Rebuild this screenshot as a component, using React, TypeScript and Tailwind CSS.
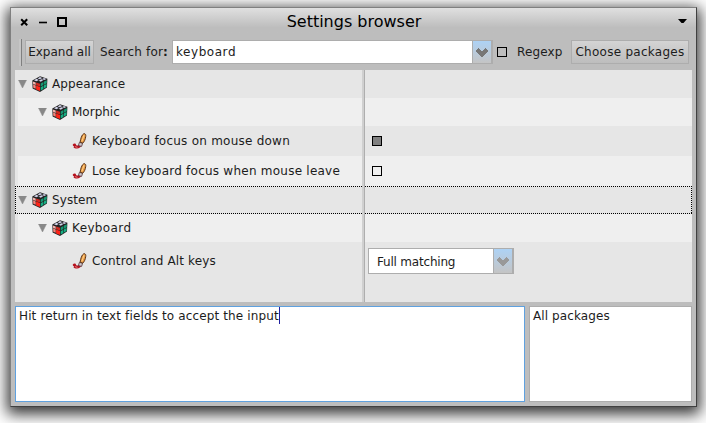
import type { ReactNode } from "react";

function CubeIcon() {
  return (
    <svg width="16" height="16" viewBox="0 0 16 16" className="shrink-0">
      <path d="M.3 4.5 8 .2 15.4 2.8 15 11.5 8 15.9.6 12.6Z" fill="#222" />
      <path d="M2 4.3 4.6 2.8 6.8 3.9 4.4 5.2ZM5.6 2.5 8 1.1 10.2 2 7.9 3.3ZM6.8 4.8 9.3 3.3 11.4 4.1 8.8 5.7ZM10.2 3 12 2 14.4 2.9 12.2 3.9Z" fill="#cfcfe6" />
      <path d="M.9 5.4 3.7 6.5V8.9L1 7.8Z" fill="#f6b4ae" />
      <path d="M1.1 8.3 3.7 9.4V12.8L1.3 11.8Z" fill="#f8857c" />
      <path d="M4.1 6.5 8 7.8V10.4L4.1 9.2Z" fill="#d02a20" />
      <path d="M4.1 9.6 8 10.9V15L4.1 13.4Z" fill="#ff2418" />
      <path d="M8.7 7.6 11.4 6.1V9.1L8.7 10.6ZM12 5.6 14.8 4.2V7.3L12 8.7Z" fill="#169872" />
      <path d="M8.7 11.2 11.4 9.7V12.9L8.7 14.6ZM12 9.3 14.6 7.9V11.1L12 12.5Z" fill="#16b084" />
    </svg>
  );
}

function BrushIcon() {
  return (
    <svg width="16" height="16" viewBox="0 0 16 16" className="shrink-0">
      <path d="M.8 11.4C2 10 4 10.5 4 11.8c0 1 1.5 1 2.6.2l2.4.6c.2 1.6-1.8 3-4 3-1.6 0-3-.4-3.6-1.3l1-.6C1.3 13.2.6 12.3.8 11.4Z" fill="#b5121e" />
      <path d="M3 13.6 5.4 14.4" stroke="#e99a9a" strokeWidth=".8" />
      <path d="M7.4 9.4 10.6 10.2 9.6 13.4 6.4 12.6Z" fill="#cfc8cc" stroke="#503038" strokeWidth=".8" />
      <path d="M8.1 9.2C8.6 6 9.6 1.8 11.8.7c1.8-.4 2.2 1.4 1.9 3-.4 2.8-1.3 4.9-2.9 6.4Z" fill="#e99a42" stroke="#5a361c" strokeWidth="1" />
      <path d="M9.8 8.4 12.1 2.2" stroke="#ffd08a" strokeWidth="1.1" />
    </svg>
  );
}

function Chevron({ color }: { color: string }) {
  return (
    <svg width="12" height="9" viewBox="0 0 12 9" shapeRendering="crispEdges">
      <path d="M0 2.4 2.4 0 6 3.5 9.6 0 12 2.4V3.4L6 9 0 3.4Z" fill={color} />
    </svg>
  );
}

function SelectionOutline() {
  const across = "absolute left-0 right-0 h-px bg-[repeating-linear-gradient(to_right,#000_0_1px,transparent_1px_2px)]";
  const down = "absolute top-0 bottom-0 w-px bg-[repeating-linear-gradient(to_bottom,#000_0_1px,transparent_1px_2px)]";
  return (
    <>
      <div className={`${across} top-0`} />
      <div className={`${across} bottom-0`} />
      <div className={`${down} left-0`} />
      <div className={`${down} right-0`} />
    </>
  );
}

interface RowProps {
  size: string;
  indent: string;
  light?: boolean;
  leaf?: boolean;
  selected?: boolean;
  label: string;
  spacing: string;
  cell?: string;
  children?: ReactNode;
}

function Row({ size, indent, light, leaf, selected, label, spacing, cell = "", children }: RowProps) {
  return (
    <div className={`relative flex ${size} ${light ? "ml-[3px] bg-[#efefef]" : "bg-[#e6e6e6]"}`}>
      <div className={`flex items-center shrink-0 ${light ? "w-[344px]" : "w-[347px]"} ${indent} ${cell}`}>
        {!leaf && (
          <svg width="9" height="8" viewBox="0 0 9 8" className="mr-[5px] shrink-0">
            <path d="M.5 0H8.5L4.5 8Z" fill="#888" stroke="#888" strokeWidth=".5" />
          </svg>
        )}
        <div className="shrink-0 w-4 h-4 mr-1">{leaf ? <BrushIcon /> : <CubeIcon />}</div>
        <span className={spacing}>{label}</span>
      </div>
      <div className="relative z-10 w-[3px] shrink-0 bg-[#d0d0d0] border-r border-[#aeaeae]" />
      <div className={`flex flex-1 items-center ${cell}`}>{children}</div>
      {selected && <SelectionOutline />}
    </div>
  );
}

export default function App() {
  return (
    <div className="w-[706px] h-[423px] overflow-hidden bg-white pl-[10px] pt-[7px] font-['DejaVu_Sans',sans-serif] text-[12px] leading-[16px] text-[#1c1c1c] whitespace-pre">
      <div className="w-[687px] h-[400px] flex flex-col border border-t-[#808080] border-l-[#808080] border-r-[#404040] border-b-[#404040] bg-[#bdbdbd] shadow-[0_4px_14px_3px_rgba(0,0,0,0.8)]">
        <header className="h-[28px] shrink-0 flex items-center bg-linear-to-b from-[#e0e0e0] to-[#bdbdbd] to-70% px-[9px]">
          <svg width="50" height="12" viewBox="0 0 50 12" className="-mt-px">
            <path d="M1.2 3.2 7.2 9.2M7.2 3.2 1.2 9.2" stroke="#000" strokeWidth="2" />
            <path d="M19 6.5H27" stroke="#000" strokeWidth="1.6" />
            <rect x="38" y="2" width="8" height="8" fill="none" stroke="#000" strokeWidth="2" />
          </svg>
          <span className="flex-1 text-center text-[16px] leading-5 text-black pr-[40px] -mt-px">Settings browser</span>
          <svg width="9" height="5" viewBox="0 0 9 5" className="-mt-px"><path d="M0 0H9L5.5 4H3.5Z" /></svg>
        </header>
        <div className="h-[34px] shrink-0 flex items-center pl-[8px] pr-[7px] -mt-px">
          <div className="w-[3px] h-[27px] bg-[#c6c6c6] border-r border-[#808080] mr-[3px]" />
          <button className="w-[69px] h-6 border border-[#adadad] bg-linear-to-b from-[#d4d4d4] to-[#bdbdbd]">Expand all</button>
          <span className="w-[72px] ml-[6px] shrink-0 tracking-[0.15px]">Search for<b>:</b></span>
          <div className="w-[321px] h-6 flex border border-[#adadad] bg-white shrink-0">
            <span className="flex-1 pl-[3px] pt-[3px] tracking-[0.55px]">keyboard</span>
            <div className="w-[20px] h-[22px] bg-linear-to-b from-[#add2f5] to-[#c4c4c4] border-l border-r border-[#adadad] flex items-center justify-center"><Chevron color="#777" /></div>
          </div>
          <div className="w-[10px] h-[10px] border border-black ml-[4px]" />
          <span className="ml-[10px] flex-1 tracking-[0.15px]">Regexp</span>
          <button className="w-[118px] h-6 border border-[#adadad] bg-linear-to-b from-[#d4d4d4] to-[#bdbdbd] tracking-[0.27px]">Choose packages</button>
        </div>
        <main className="mx-[4px] mt-px h-[232px] bg-[#e6e6e6] shrink-0">
          <Row size="h-[28px]" indent="pl-[3px]" label="Appearance" spacing="tracking-[0.12px]" />
          <Row size="h-[28px]" indent="pl-[20px]" light label="Morphic" spacing="" />
          <Row size="h-[30px]" indent="pl-[57px]" leaf label="Keyboard focus on mouse down" spacing="tracking-[0.24px]">
            <div className="ml-[7px] w-[10px] h-[10px] border border-black bg-[#808080]" />
          </Row>
          <Row size="h-[30px]" indent="pl-[54px]" light leaf label="Lose keyboard focus when mouse leave" spacing="tracking-[0.24px]">
            <div className="ml-[7px] w-[10px] h-[10px] border border-black" />
          </Row>
          <Row size="h-[28px]" indent="pl-[3px]" selected label="System" spacing="tracking-[0.1px]" />
          <Row size="h-[28px]" indent="pl-[20px]" light label="Keyboard" spacing="tracking-[0.37px]" />
          <Row size="h-[60px]" cell="pb-[22px]" indent="pl-[57px]" leaf label="Control and Alt keys" spacing="tracking-[0.15px]">
            <div className="ml-[3px] w-[146px] h-[26px] flex border border-[#adadad] bg-white">
              <span className="flex-1 pl-[8px] pt-[5px] tracking-[-0.2px]">Full matching</span>
              <div className="w-[20px] bg-linear-to-b from-[#add2f5] to-[#c4c4c4] border-l border-r border-[#adadad] flex items-center justify-center"><Chevron color="#999" /></div>
            </div>
          </Row>
        </main>
        <footer className="flex gap-[4px] px-[4px] mt-[4px] h-[96px] shrink-0">
          <div className="w-[510px] border border-[#5fa1df] bg-white pl-[3px] flex items-start">
            <span className="border-r border-[#2020a0] pt-px tracking-[0.13px]">Hit return in text fields to accept the input</span>
          </div>
          <div className="flex-1 border border-[#adadad] bg-white pl-[3px] pt-px tracking-[0.1px]">All packages</div>
        </footer>
      </div>
    </div>
  );
}
